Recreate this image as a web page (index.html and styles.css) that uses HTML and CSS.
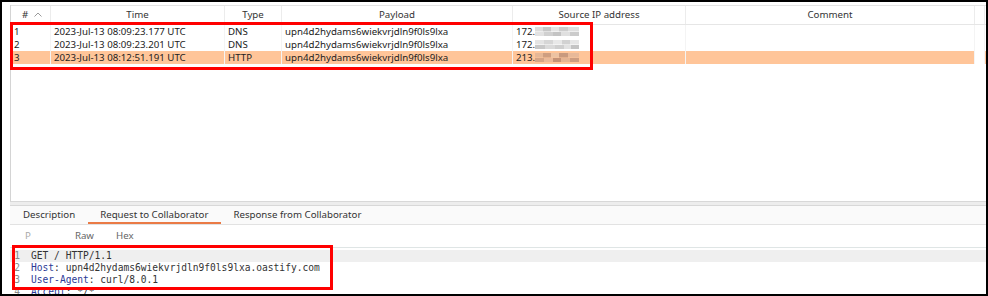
FILE: index.html
```html
<!DOCTYPE html>
<html lang="en">
<head>
    <meta charset="UTF-8">
    <title>Collaborator interactions</title>
    <link rel="stylesheet" href="styles.css">
</head>
<body>
    <div class="window">
        <!-- Lista de interacoes -->
        <div class="table-pane">
            <div class="row head">
                <div class="cell">#<svg class="sort" width="8" height="5" viewBox="0 0 8 5"><path d="M0.5 4.5 L4 1 L7.5 4.5" fill="none" stroke="#9a9a9a" stroke-width="1"/></svg></div>
                <div class="cell">Time</div>
                <div class="cell">Type</div>
                <div class="cell">Payload</div>
                <div class="cell">Source IP address</div>
                <div class="cell">Comment</div>
                <div class="cell"></div>
            </div>
            <div class="row">
                <div class="cell">1</div>
                <div class="cell">2023-Jul-13 08:09:23.177 UTC</div>
                <div class="cell">DNS</div>
                <div class="cell">upn4d2hydams6wiekvrjdln9f0ls9lxa</div>
                <div class="cell">172.<span class="blur"></span></div>
                <div class="cell"></div>
                <div class="cell"></div>
            </div>
            <div class="row">
                <div class="cell">2</div>
                <div class="cell">2023-Jul-13 08:09:23.201 UTC</div>
                <div class="cell">DNS</div>
                <div class="cell">upn4d2hydams6wiekvrjdln9f0ls9lxa</div>
                <div class="cell">172.<span class="blur blur-b"></span></div>
                <div class="cell"></div>
                <div class="cell"></div>
            </div>
            <div class="row selected">
                <div class="cell">3</div>
                <div class="cell">2023-Jul-13 08:12:51.191 UTC</div>
                <div class="cell">HTTP</div>
                <div class="cell">upn4d2hydams6wiekvrjdln9f0ls9lxa</div>
                <div class="cell">213.<span class="blur blur-c"></span></div>
                <div class="cell"></div>
                <div class="cell"></div>
            </div>
        </div>

        <div class="splitter"></div>

        <!-- Abas de detalhe -->
        <div class="tabs">
            <span class="tab">Description</span>
            <span class="tab active">Request to Collaborator</span>
            <span class="tab">Response from Collaborator</span>
        </div>

        <div class="subtabs">
            <span class="subtab faded">P</span>
            <span class="subtab">Raw</span>
            <span class="subtab">Hex</span>
        </div>

        <div class="editor">
            <div class="line current"><span class="ln">1</span><span class="code">GET / HTTP/1.1</span></div>
            <div class="line"><span class="ln">2</span><span class="code"><span class="key">Host</span>: upn4d2hydams6wiekvrjdln9f0ls9lxa.oastify.com</span></div>
            <div class="line"><span class="ln">3</span><span class="code"><span class="key">User-Agent</span>: curl/8.0.1</span></div>
            <div class="line"><span class="ln">4</span><span class="code"><span class="key">Accept</span>: */*</span></div>
        </div>

        <!-- Marcacoes vermelhas -->
        <div class="mark mark-table"></div>
        <div class="mark mark-request"></div>
    </div>
</body>
</html>
```

FILE: styles.css
```css
* {
    margin: 0;
    padding: 0;
    box-sizing: border-box;
}

body {
    background: #fff;
    font-family: 'Noto Sans', sans-serif;
    color: #222;
}

.window {
    position: relative;
    width: 988px;
    height: 296px;
    border: 2px solid #000;
    padding: 3px 0 0 8px;
    overflow: hidden;
    background: #fff;
}

/* Tabela */
.table-pane {
    height: 197px;
    border-left: 1px solid #d4d4d4;
    border-bottom: 1px solid #d8d8d8;
}

.row {
    display: grid;
    grid-template-columns: 40px 174px 57px 231px 173px 289px 10px;
    height: 13px;
    font-size: 9.7px;
    line-height: 13px;
}

.row .cell {
    padding-left: 3px;
    white-space: nowrap;
    overflow: hidden;
    border-right: 1px solid #f4f4f4;
}

.row.head {
    height: 20px;
    border-top: 1px solid #e4e4e4;
    border-bottom: 1px solid #e6e6e6;
    line-height: 18px;
    font-size: 9.7px;
    color: #333;
}

.row.head .cell {
    text-align: center;
    padding-left: 0;
    border-right: 1px solid #ececec;
}

.row.head .cell:first-child {
    text-align: left;
    padding-left: 11px;
}

.sort {
    margin-left: 6px;
    vertical-align: 1px;
}

.row.selected {
    background: #ffc599;
}

.row.selected .cell:last-child {
    background: #fff;
}

.blur {
    display: inline-block;
    width: 44px;
    height: 9px;
    vertical-align: -1px;
    background:
        linear-gradient(90deg, #dcdcdc 0 18%, #c6c6c6 18% 36%, #e4e4e4 36% 55%, #cdcdcd 55% 75%, #dedede 75%) top / 100% 50% no-repeat,
        linear-gradient(90deg, #e2e2e2 0 20%, #d0d0d0 20% 42%, #c4c4c4 42% 60%, #e0e0e0 60% 80%, #cbcbcb 80%) bottom / 100% 50% no-repeat;
}

.blur-b {
    background:
        linear-gradient(90deg, #e4e4e4 0 20%, #d6d6d6 20% 40%, #e8e8e8 40% 62%, #d2d2d2 62% 80%, #e6e6e6 80%) top / 100% 50% no-repeat,
        linear-gradient(90deg, #c8c8c8 0 22%, #dadada 22% 45%, #cfcfcf 45% 65%, #e2e2e2 65% 82%, #c4c4c4 82%) bottom / 100% 50% no-repeat;
}

.blur-c {
    background:
        linear-gradient(90deg, #e6b796 0 18%, #cf9e80 18% 36%, #ecc2a2 36% 55%, #c99a7e 55% 74%, #e8b999 74%) top / 100% 50% no-repeat,
        linear-gradient(90deg, #d5a485 0 20%, #eab999 20% 40%, #c49276 40% 58%, #e4b493 58% 80%, #cc9c80 80%) bottom / 100% 50% no-repeat;
}

.splitter {
    height: 4px;
    background: #ededed;
    border-bottom: 1px solid #d8d8d8;
}

/* Abas */
.tabs {
    display: flex;
    height: 19px;
    padding-left: 13px;
    background: #fafafa;
    border-bottom: 1px solid #e2e2e2;
    font-size: 9.7px;
    line-height: 17px;
    color: #333;
}

.tab {
    margin-right: 13px;
}

.tab.active {
    padding: 0 13px 0 12px;
    margin-right: 12px;
    border-bottom: 2px solid #ea7a45;
}

.subtabs {
    display: flex;
    height: 23px;
    padding-left: 15px;
    border-bottom: 1px solid #dfe5e5;
    font-size: 9.7px;
    line-height: 22px;
    color: #666;
}

.subtab {
    margin-right: 22px;
}

.subtab.faded {
    color: #aaa;
    margin-right: 44px;
}

/* Editor */
.editor {
    padding-top: 2px;
    font-family: 'DejaVu Sans Mono', monospace;
    font-size: 9.6px;
    color: #333;
}

.line {
    display: flex;
    height: 12px;
    line-height: 12px;
    white-space: pre;
}

.line.current {
    background: #efefef;
}

.ln {
    width: 10px;
    text-align: right;
    color: #888;
}

.code {
    margin-left: 11px;
}

.key {
    color: #2c3a96;
}

/* Marcacoes */
.mark {
    position: absolute;
    border: 3px solid #f00;
}

.mark-table {
    left: 8px;
    top: 20px;
    width: 583px;
    height: 48px;
}

.mark-request {
    left: 10px;
    top: 243px;
    width: 321px;
    height: 45px;
}
```
